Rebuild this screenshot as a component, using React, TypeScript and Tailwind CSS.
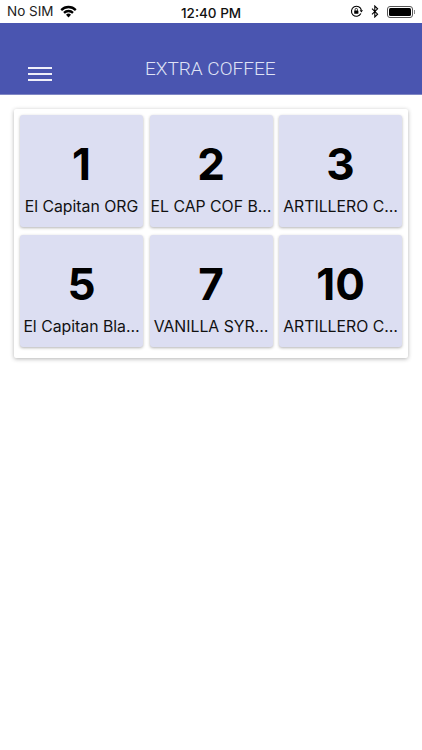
const items = [
  { n: "1", label: "El Capitan ORG" },
  { n: "2", label: "EL CAP COF B…" },
  { n: "3", label: "ARTILLERO C…" },
  { n: "5", label: "El Capitan Bla…" },
  { n: "7", label: "VANILLA SYR…" },
  { n: "10", label: "ARTILLERO C…" },
];

function Wifi() {
  return (
    <svg width="17" height="13" viewBox="0 0 17 13" className="block">
      <path d="M0.4 4.2A11.4 11.4 0 0 1 16.6 4.2L15 5.9A9.2 9.2 0 0 0 2 5.9Z" fill="#000" />
      <path d="M3.2 7A7.4 7.4 0 0 1 13.8 7L12.2 8.7A5.2 5.2 0 0 0 4.8 8.7Z" fill="#000" />
      <path d="M6 9.8A3.5 3.5 0 0 1 11 9.8L8.5 12.5Z" fill="#000" />
    </svg>
  );
}

function RotationLock() {
  return (
    <svg width="13" height="13" viewBox="0 0 13 13" className="block">
      <path d="M10.9 8.6A5 5 0 1 1 11.4 5.4" fill="none" stroke="#000" strokeWidth="1.1" />
      <path d="M9.6 5.2L13 5.2L11.4 7.6Z" fill="#000" />
      <rect x="4.2" y="5.6" width="4.2" height="3.2" rx="0.5" fill="#000" />
      <path d="M5.1 5.8V4.6A1.2 1.2 0 0 1 7.5 4.6V5.8" fill="none" stroke="#000" strokeWidth="0.8" />
    </svg>
  );
}

function Bluetooth() {
  return (
    <svg width="8" height="13" viewBox="0 0 8 13" className="block">
      <path d="M1 3.6L6.6 9.2L3.8 12V1L6.6 3.8L1 9.4" fill="none" stroke="#000" strokeWidth="1.1" />
    </svg>
  );
}

function Battery() {
  return (
    <div className="flex items-center">
      <div className="h-[12px] w-[26px] rounded-[3px] border border-[#555] p-[1px]">
        <div className="h-full w-full rounded-[1.5px] bg-black" />
      </div>
      <div className="ml-[1px] h-[4px] w-[1px] bg-[#888]" />
    </div>
  );
}

export default function App() {
  return (
    <div className="min-h-[750px] bg-white font-['Inter',sans-serif] text-black">
      <div className="relative flex h-[23px] items-center justify-between pl-[7px] pr-[7px] text-[13.5px]">
        <div className="flex items-center gap-[6px]">
          <span className="text-[#222]">No SIM</span>
          <Wifi />
        </div>
        <span className="absolute left-[181px] top-[3px] text-[13.5px] font-medium text-[#111]">12:40 PM</span>
        <div className="flex items-center gap-[8px]">
          <RotationLock />
          <Bluetooth />
          <Battery />
        </div>
      </div>
      <header className="flex h-[72px] items-end border-b border-b-[#8087c4] bg-[#4a55b0] pb-[13px]">
        <div className="ml-[28px] flex w-[24px] flex-col gap-[4px]">
          <div className="h-[2px] bg-[#f0f0fa]" />
          <div className="h-[2px] bg-[#f0f0fa]" />
          <div className="h-[2px] bg-[#f0f0fa]" />
        </div>
        <h1 className="-mb-[1px] ml-[93px] font-['Roboto',sans-serif] text-[19px] font-light leading-[26px] text-[#dfe2f5]">EXTRA COFFEE</h1>
      </header>
      <main className="mx-[14px] mt-[14px] rounded-[2px] bg-white px-[6px] pb-[11px] pt-[6px] shadow-[0_1px_4px_rgba(0,0,0,0.3)]">
        <div className="grid grid-cols-3 gap-x-[6.5px] gap-y-[8px]">
          {items.map((item) => (
            <div
              key={item.n}
              className="flex h-[112px] min-w-0 flex-col items-center rounded-[3px] bg-[#dcdef2] pt-[21px] shadow-[0_1px_3px_rgba(0,0,0,0.3)]"
            >
              <div className="text-[44px] font-bold leading-[56px] text-black">{item.n}</div>
              <div className="mt-[5px] whitespace-nowrap text-center text-[15.8px] leading-[20px] text-[#111]">
                {item.label}
              </div>
            </div>
          ))}
        </div>
      </main>
    </div>
  );
}
